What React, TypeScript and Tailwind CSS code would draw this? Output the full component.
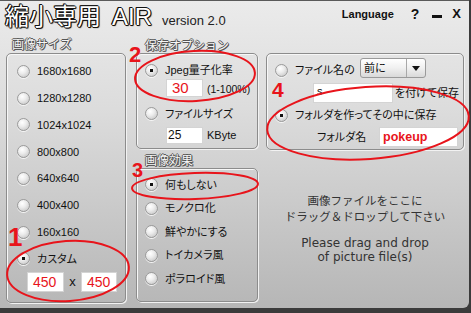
import React from "react";

const Radio = ({ checked }: { checked?: boolean }) => (
  <span className="inline-flex h-[13px] w-[13px] shrink-0 items-center justify-center rounded-full border border-[#9a9a9a] bg-[radial-gradient(circle_at_38%_32%,#ffffff_0%,#ececec_40%,#bdbdbd_100%)] shadow-[0_1px_0_#f5f5f5]">
    {checked && <span className="h-[3px] w-[3px] bg-[#111]" />}
  </span>
);

const boxCls =
  "rounded-[5px] border border-[#8c8c8c] shadow-[inset_1px_1px_0_#f7f7f7,1px_1px_0_#f2f2f2]";
const labelCls =
  "whitespace-nowrap text-[12px] leading-[14px] text-[#f6f6f6] [text-shadow:-1px_0_0_#555,1px_0_0_#555,0_-1px_0_#555,0_1px_0_#555,1px_1px_0_#555]";
const jp = "whitespace-nowrap [font-feature-settings:'palt'] text-[11px] text-[#111]";
const titleShadow =
  "[text-shadow:-1px_0_0_#111,1px_0_0_#111,0_-1px_0_#111,0_1px_0_#111,1px_1px_1px_#000,-1px_-1px_0_#111]";

export default function App() {
  const sizes = ["1680x1680", "1280x1280", "1024x1024", "800x800", "640x640", "400x400", "160x160"];
  const effects = ["何もしない", "モノクロ化", "鮮やかにする", "トイカメラ風", "ポラロイド風"];
  return (
    <div className="relative h-[313px] w-[471px] overflow-hidden bg-[#3b3b3b] font-['Liberation_Sans','Noto_Sans_CJK_JP',sans-serif] text-[#111]">
      <div className="h-[308px] w-[469px] rounded-br-[6px] border-t border-[#5a5a5a] bg-[linear-gradient(180deg,#ebebeb_0%,#dcdcdc_35%,#cbcbcb_65%,#b6b6b6_100%)]">
        {/* top bar */}
        <div className="flex h-[35px] items-start">
          <div className="ml-[5px] mt-[1px] flex items-baseline">
            <span className={`text-[24px] leading-[30px] text-white ${titleShadow}`}>縮小専用</span>
            <span className={`ml-[11px] text-[24px] leading-[30px] text-white ${titleShadow}`}>AIR</span>
            <span className="ml-[10px] text-[13px] text-[#222]">version 2.0</span>
          </div>
          <div className="ml-auto mr-[8px] mt-[6px] flex items-center">
            <span className="text-[11px] font-bold leading-[14px]">Language</span>
            <span className="ml-[17px] text-[14px] font-bold leading-[14px]">?</span>
            <span className="ml-[13px] mt-[5px] h-[3px] w-[10px] bg-[#111]" />
            <span className="ml-[10px] text-[13px] font-bold leading-[14px]">X</span>
          </div>
        </div>

        {/* main */}
        <div className="flex pl-[6px]">
          {/* left column */}
          <div className="flex w-[120px] flex-col">
            <div className={`ml-[6px] mt-[2px] h-[15px] ${labelCls}`}>画像サイズ</div>
            <div className={`flex h-[250px] flex-col pl-[10px] pt-[4px] ${boxCls}`}>
              {sizes.map((s) => (
                <div key={s} className="flex h-[26.8px] items-center">
                  <Radio />
                  <span className="ml-[7px] text-[11px]">{s}</span>
                </div>
              ))}
              <div className="flex h-[26.8px] items-center">
                <Radio checked />
                <span className={`ml-[7px] ${jp}`}>カスタム</span>
              </div>
              <div className="ml-[10px] flex h-[20px] items-center">
                <div className="h-[20px] w-[37px] border border-[#d4d4d4] bg-white pl-[5px] text-[14px] leading-[18px] text-[#e8141b]">
                  450
                </div>
                <span className="w-[17px] text-center text-[13px] leading-[14px]">x</span>
                <div className="h-[20px] w-[36px] border border-[#d4d4d4] bg-white pl-[5px] text-[14px] leading-[18px] text-[#e8141b]">
                  450
                </div>
              </div>
            </div>
          </div>

          {/* middle column */}
          <div className="ml-[10px] flex w-[122px] flex-col">
            <div className={`ml-[9px] mt-[3px] h-[14px] ${labelCls}`}>保存オプション</div>
            <div className={`h-[96px] pl-[8px] pt-[8px] ${boxCls}`}>
              <div className="flex h-[16px] items-center">
                <Radio checked />
                <span className={`ml-[7px] ${jp}`}>Jpeg量子化率</span>
              </div>
              <div className="ml-[21px] mt-[1px] flex items-center">
                <div className="h-[18px] w-[37px] border border-[#d4d4d4] bg-white pl-[5px] text-[15px] leading-[16px] text-[#e8141b]">
                  30
                </div>
                <span className="ml-[4px] mt-[3px] whitespace-nowrap text-[10.5px]">(1-100%)</span>
              </div>
              <div className="mt-[8px] flex h-[16px] items-center">
                <Radio />
                <span className={`ml-[7px] ${jp}`}>ファイルサイズ</span>
              </div>
              <div className="ml-[21px] mt-[5px] flex items-center">
                <div className="h-[17px] w-[37px] border border-[#d4d4d4] bg-white pl-[1px] text-[12px] leading-[15px]">
                  25
                </div>
                <span className="ml-[4px] text-[11px]">KByte</span>
              </div>
            </div>
            <div className={`ml-[9px] mt-[5px] h-[14px] ${labelCls}`}>画像効果</div>
            <div className={`h-[134px] pl-[8px] pt-[4px] ${boxCls}`}>
              {effects.map((e, i) => (
                <div key={e} className="flex h-[23.5px] items-center">
                  <Radio checked={i === 0} />
                  <span className={`ml-[7px] ${jp}`}>{e}</span>
                </div>
              ))}
            </div>
          </div>

          {/* right column */}
          <div className="ml-[8px] flex w-[198px] flex-col">
            <div className={`mt-[17px] h-[97px] pl-[8px] pt-[4px] ${boxCls}`}>
              <div className="flex h-[20px] items-center">
                <div className="mt-[4px] flex w-[85px] items-center">
                  <Radio />
                  <span className={`ml-[7px] ${jp}`}>ファイル名の</span>
                </div>
                <div className="flex h-[20px] w-[66px] items-center rounded-[3px] border border-[#9a9a9a] bg-[linear-gradient(180deg,#ffffff_0%,#f0f0f0_50%,#d9d9d9_100%)]">
                  <span className={`w-[45px] pl-[3px] ${jp} leading-[18px]`}>前に</span>
                  <span className="flex h-full flex-1 items-center justify-center border-l border-[#a8a8a8]">
                    <span className="h-0 w-0 border-x-[4px] border-t-[5px] border-x-transparent border-t-[#111]" />
                  </span>
                </div>
              </div>
              <div className="ml-[38px] mt-[5px] flex items-center">
                <div className="h-[20px] w-[80px] border border-[#d4d4d4] bg-white pl-[3px] text-[11px] leading-[14px]">
                  s
                </div>
                <span className={`ml-[2px] ${jp}`}>を付けて保存</span>
              </div>
              <div className="mt-[4px] flex h-[16px] items-center">
                <Radio checked />
                <span className={`ml-[7px] ${jp}`}>フォルダを作ってその中に保存</span>
              </div>
              <div className="ml-[42px] mt-[4px] flex items-center">
                <span className={`w-[62px] ${jp}`}>フォルダ名</span>
                <div className="h-[20px] w-[79px] border border-[#d4d4d4] bg-white pl-[3px] text-[12.5px] font-bold leading-[18px] text-[#e8141b]">
                  pokeup
                </div>
              </div>
            </div>
            <div className="mt-[42px] text-center font-['DejaVu_Sans','Noto_Sans_CJK_JP',sans-serif] text-[12px] leading-[14px] text-[#333]">
              <div className="font-['Noto_Sans_CJK_JP',sans-serif] text-[11.5px] leading-[16px]">画像ファイルをここに</div>
              <div className="font-['Noto_Sans_CJK_JP',sans-serif] text-[11.5px] leading-[16px]">ドラッグ＆ドロップして下さい</div>
              <div className="mt-[12px]">Please drag and drop</div>
              <div>of picture file(s)</div>
            </div>
          </div>
        </div>
      </div>

      {/* red annotations */}
      <svg
        className="pointer-events-none absolute left-0 top-0"
        width="471"
        height="313"
        viewBox="0 0 471 313"
        fill="none"
        stroke="#e8141b"
        strokeWidth="2"
      >
        <ellipse cx="68" cy="271" rx="61" ry="30" transform="rotate(-4 68 271)" />
        <ellipse cx="195" cy="76" rx="60" ry="25" transform="rotate(-3 195 76)" />
        <ellipse cx="195" cy="186" rx="63" ry="13" transform="rotate(-2 195 186)" />
        <ellipse cx="368" cy="123" rx="101" ry="36" transform="rotate(-4 368 123)" />
      </svg>
      <div className="pointer-events-none absolute left-[8px] top-[224px] text-[26px] font-bold leading-none text-[#e8141b]">1</div>
      <div className="pointer-events-none absolute left-[129px] top-[44px] text-[22px] font-bold leading-none text-[#e8141b]">2</div>
      <div className="pointer-events-none absolute left-[132px] top-[160px] text-[20px] font-bold leading-none text-[#e8141b]">3</div>
      <div className="pointer-events-none absolute left-[272px] top-[79px] text-[21px] font-bold leading-none text-[#e8141b]">4</div>
    </div>
  );
}
